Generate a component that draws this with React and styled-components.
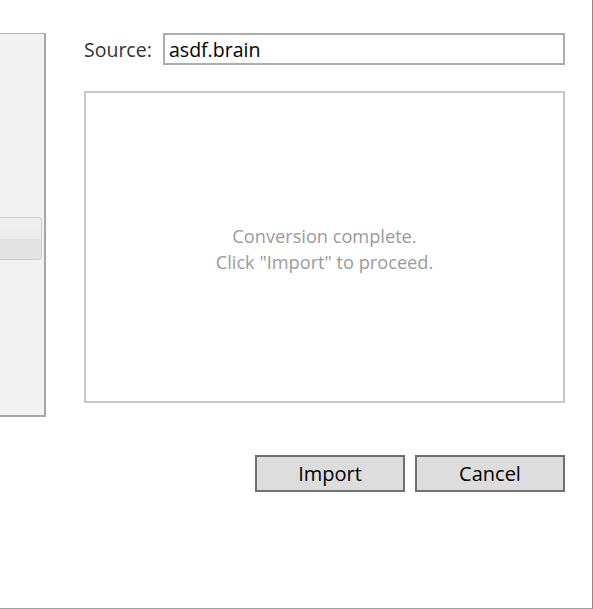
import React from "react";
import styled, { createGlobalStyle } from "styled-components";

const Global = createGlobalStyle`
  html, body { margin: 0; padding: 0; background: #ffffff; }
  body { font-family: "Open Sans", "Noto Sans", sans-serif; }
  * { box-sizing: border-box; }
`;

const Window = styled.div`
  width: 593px;
  height: 609px;
  display: flex;
  border-right: 1px solid #8c8c8c;
  border-bottom: 1px solid #9aa0a4;
  background: #ffffff;
`;

const SidePanel = styled.div`
  width: 46px;
  height: 384px;
  margin-top: 33px;
  background: #f2f2f2;
  border-top: 1px solid #b4b4b4;
  border-right: 2px solid #a6a6a6;
  border-bottom: 2px solid #a6a6a6;
  display: flex;
  flex-direction: column;
  justify-content: flex-start;
  padding-top: 183px;
  padding-right: 2px;
`;

const SideButton = styled.div`
  height: 43px;
  border: 1px solid #cdcdcd;
  border-left: none;
  border-radius: 0 4px 4px 0;
  background: linear-gradient(#f0f0f0 0%, #ececec 50%, #e3e3e3 51%, #e5e5e5 100%);
`;

const Main = styled.div`
  flex: 1;
  display: flex;
  flex-direction: column;
  padding: 33px 27px 0 38px;
`;

const SourceRow = styled.div`
  display: flex;
  align-items: center;
  height: 32px;
`;

const Label = styled.label`
  font-size: 19.5px;
  color: #333333;
  width: 79px;
  padding-left: 0;
`;

const Input = styled.div`
  flex: 1;
  height: 32px;
  border: 2px solid #abadb3;
  padding: 0 4px;
  font-size: 19.5px;
  color: #000;
  display: flex;
  align-items: center;
`;

const Preview = styled.div`
  margin-top: 26px;
  height: 312px;
  border: 2px solid #c8c8c8;
  display: flex;
  flex-direction: column;
  align-items: center;
  justify-content: center;
  color: #9a9a9a;
  font-size: 18.2px;
  line-height: 26px;
  padding-top: 4px;
`;

const Actions = styled.div`
  display: flex;
  justify-content: flex-end;
  gap: 10px;
  margin-top: 52px;
`;

const Button = styled.button`
  width: 150px;
  height: 37px;
  border: 2px solid #707070;
  background: #dddddd;
  font-family: "Open Sans", "Noto Sans", sans-serif;
  font-size: 20px;
  color: #000;
  padding: 0;
`;

export default function App() {
  return (
    <>
      <Global />
      <Window>
        <SidePanel>
          <SideButton />
        </SidePanel>
        <Main>
          <SourceRow>
            <Label>Source:</Label>
            <Input>asdf.brain</Input>
          </SourceRow>
          <Preview>
            <div>Conversion complete.</div>
            <div>Click "Import" to proceed.</div>
          </Preview>
          <Actions>
            <Button>Import</Button>
            <Button>Cancel</Button>
          </Actions>
        </Main>
      </Window>
    </>
  );
}
